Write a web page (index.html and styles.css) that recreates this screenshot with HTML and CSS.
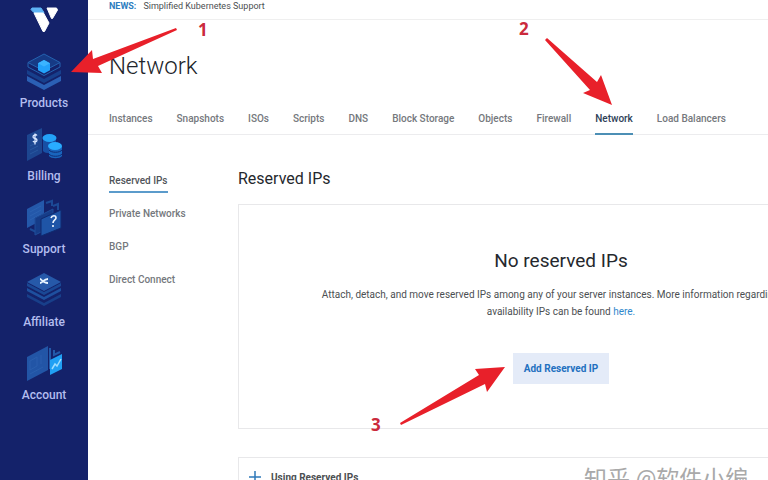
FILE: index.html
```html
<!DOCTYPE html>
<html lang="en">
<head>
    <meta charset="UTF-8">
    <meta name="viewport" content="width=device-width, initial-scale=1.0">
    <title>Network - Reserved IPs</title>
    <link rel="stylesheet" href="styles.css">
</head>
<body>
    <div class="app">
        <!-- Sidebar -->
        <nav class="sidebar">
            <a class="logo" href="#" aria-label="Home">
                <svg width="28" height="26" viewBox="0 0 28 26">
                    <path d="M2 1h9l3 4.500H3.800L1 2.500Z" fill="#5fb4f5" stroke="#5fb4f5" stroke-linejoin="round"/>
                    <path d="M4 6h9.500l5.500 10-4.500 8.500h-1.500Z" fill="#fff" stroke="#fff" stroke-linejoin="round"/>
                    <path d="M17 1h9.500l1 2-5 8.500h-1Z" fill="#fff" stroke="#fff" stroke-linejoin="round"/>
                </svg>
            </a>
            <a class="side-item" href="#">
                <svg width="36" height="38" viewBox="0 0 36 38">
                    <path d="M1 24l17 9 17-9v5l-17 9-17-9Z" fill="#2b60b5"/>
                    <path d="M1 18l17 9 17-9v4l-17 9-17-9Z" fill="#173f8c"/>
                    <path d="M18 2l16 8.500-16 8.500L2 10.500Z" fill="#163a85" stroke="#2462b0"/>
                    <path d="M2 15l16 8.500L34 15M2 10.500V15M34 10.500V15" fill="none" stroke="#2462b0"/>
                    <path d="M18 8l6 3.200v7L18 21.500l-6-3.300v-7Z" fill="#22a1fa"/>
                    <path d="M18 8l6 3.200-6 3.300-6-3.300Z" fill="#3bb4ff"/>
                </svg>
                <span>Products</span>
            </a>
            <a class="side-item" href="#">
                <svg width="36" height="38" viewBox="0 0 36 38">
                    <path d="M1 10l15-7v25L1 36Z" fill="#1d4690"/>
                    <path d="M4 25l8-4M4 29l8-4M4 21l8-4" stroke="#28589f"/>
                    <path d="M11 10.500c-1-1.500-4-.5-4 1.500s4 1 4 3-3 3-4 1M9 8.500v11" fill="none" stroke="#d9e7ff" stroke-width="1.300"/>
                    <path d="M17 13v13c2 3 12 3 13 0V13Z" fill="#1750a5"/>
                    <path d="M23 21v10c2 3 11 3 13 0V21Z" fill="#1965bd"/>
                    <path d="M23 25c2 3 11 3 13 0M23 29c2 3 11 3 13 0" fill="none" stroke="#102d76"/>
                    <ellipse cx="23.500" cy="13" rx="7" ry="4" fill="#23a2f7"/>
                    <ellipse cx="29" cy="21" rx="7" ry="4" fill="#29acff"/>
                </svg>
                <span>Billing</span>
            </a>
            <a class="side-item" href="#">
                <svg width="36" height="38" viewBox="0 0 36 38">
                    <path d="M1 11l17-9v19L1 30Z" fill="#2458aa"/>
                    <path d="M4 14l11-6M4 18l11-6M4 22l11-6" stroke="#2c62b2"/>
                    <path d="M20 5l6-2v5M27 8l5-2v6M4 31l6 3v-6" fill="none" stroke="#1c4a96" stroke-width="2"/>
                    <path d="M9 20l18-9v17L9 37Z" fill="#163c88" stroke="#1f4d9a"/>
                    <path d="M15 21l20-9v18l-15 6-5 2Z" fill="#1f55a7" stroke="#102a70"/>
                    <path d="M25 20c1-3 5-3 5 0 0 2-3 2-3 5M27 27v2" fill="none" stroke="#eef5ff" stroke-width="1.600"/>
                </svg>
                <span>Support</span>
            </a>
            <a class="side-item" href="#">
                <svg width="36" height="38" viewBox="0 0 36 38">
                    <path d="M1 23l17 9 17-9v3l-17 9-17-9Z" fill="#183f8a"/>
                    <path d="M1 17l17 9 17-9v3l-17 9-17-9Z" fill="#1e509f"/>
                    <path d="M1 12l17 9 17-9v3l-17 9-17-9Z" fill="#1a4895"/>
                    <path d="M18 2l17 9-17 9L1 11Z" fill="#2659a9"/>
                    <path d="M14 8c2 0 2 4 8 4M14 12c2 0 4-4 8-4" fill="none" stroke="#e7f4ff" stroke-width="1.800"/>
                </svg>
                <span>Affiliate</span>
            </a>
            <a class="side-item" href="#">
                <svg width="36" height="38" viewBox="0 0 36 38">
                    <path d="M1 13l21-11v24L1 37Z" fill="#2255a6"/>
                    <path d="M4 17l7-4v9l-7 4ZM4 30l13-7M15 11v9" fill="none" stroke="#2a5fae"/>
                    <path d="M24 4v21M28 6v5l6-3" fill="none" stroke="#235aa9" stroke-width="2"/>
                    <path d="M24 16l12-6v15l-12 6Z" fill="#20a0f4"/>
                    <path d="M26 25l3-5 2 2 4-7" fill="none" stroke="#9eddff" stroke-width="1.500"/>
                </svg>
                <span>Account</span>
            </a>
        </nav>

        <!-- Main content -->
        <main class="main">
            <div class="news"><a href="#">NEWS:</a><span>Simplified Kubernetes Support</span></div>
            <h1>Network</h1>

            <nav class="tabs">
                <a href="#">Instances</a>
                <a href="#">Snapshots</a>
                <a href="#">ISOs</a>
                <a href="#">Scripts</a>
                <a href="#">DNS</a>
                <a href="#">Block Storage</a>
                <a href="#">Objects</a>
                <a href="#">Firewall</a>
                <a class="active" href="#">Network</a>
                <a href="#">Load Balancers</a>
            </nav>

            <div class="content">
                <nav class="subnav">
                    <a class="active" href="#">Reserved IPs</a>
                    <a href="#">Private Networks</a>
                    <a href="#">BGP</a>
                    <a href="#">Direct Connect</a>
                </nav>

                <section class="panel">
                    <h2>Reserved IPs</h2>
                    <div class="card empty">
                        <h3>No reserved IPs</h3>
                        <p>Attach, detach, and move reserved IPs among any of your server instances. More information regarding high availability IPs can be found <a href="#">here.</a></p>
                        <button type="button">Add Reserved IP</button>
                    </div>
                    <div class="card help">
                        <svg width="12" height="12" viewBox="0 0 12 12"><path d="M6 0v12M0 6h12" stroke="#2f79b9" stroke-width="1.500"/></svg>
                        <h4>Using Reserved IPs</h4>
                    </div>
                </section>
            </div>
        </main>

        <!-- Step arrows and numbers over the page -->
        <svg class="arrow arrow-1" width="110" height="48" viewBox="0 0 110 48"><path d="M1 45L22 23l1 9L106 1l1 2L28 39l4 7Z"/></svg>
        <svg class="arrow arrow-2" width="70" height="70" viewBox="0 0 70 70"><path d="M1 2L3 0L53 44L57 37L68 67L39 55L46 52Z"/></svg>
        <svg class="arrow arrow-3" width="108" height="62" viewBox="0 0 108 62"><path d="M1 59L80 11L76 5L106 3L88 28L86 20L2 61Z"/></svg>
        <span class="step step-1">1</span>
        <span class="step step-2">2</span>
        <span class="step step-3">3</span>
        <span class="watermark">知乎 @软件小编</span>
    </div>
</body>
</html>
```
FILE: styles.css
```css
* {
    box-sizing: border-box;
}

body {
    margin: 0;
    font-family: Roboto, "Liberation Sans", sans-serif;
    font-size: 10px;
    color: #4c4f52;
    background-color: #fff;
}

a {
    color: inherit;
    text-decoration: none;
}

h1, h2, h3, h4, p {
    margin: 0;
}

.app {
    position: relative;
    display: flex;
    height: 100vh;
    overflow: hidden;
}

/* Sidebar */
.sidebar {
    flex: 0 0 88px;
    padding-top: 7px;
    background-color: #14226a;
    display: flex;
    flex-direction: column;
    align-items: center;
}

.logo {
    height: 45px;
}

.side-item {
    height: 73px;
    flex-shrink: 0;
    display: flex;
    flex-direction: column;
    align-items: center;
    gap: 5px;
    color: #b3bdef;
    font-size: 12px;
    font-weight: 500;
    line-height: 16px;
}

/* Main content */
.main {
    flex: 1;
    min-width: 0;
    overflow: hidden;
}

.news {
    display: flex;
    gap: 7px;
    height: 20px;
    padding-left: 21px;
    border-bottom: 1px solid #efefef;
    font-size: 9px;
    line-height: 12px;
}

.news a {
    color: #2d7dc0;
    font-weight: 700;
}

h1 {
    padding: 29px 21px 0;
    font-size: 24px;
    font-weight: 300;
    line-height: 34px;
    color: #22252b;
}

/* Tabs */
.tabs {
    display: flex;
    gap: 24px;
    margin-top: 23px;
    padding-left: 21px;
    border-bottom: 1px solid #ececee;
    font-weight: 500;
    white-space: nowrap;
    color: #75787d;
}

.tabs a {
    height: 29px;
    line-height: 26px;
    margin-bottom: -1px;
}

.tabs .active {
    color: #2f3f58;
    border-bottom: 2px solid #4c8fb5;
}

.content {
    display: flex;
    padding: 31px 0 0 21px;
}

.subnav {
    flex: 0 0 129px;
    display: flex;
    flex-direction: column;
    align-items: flex-start;
    gap: 9px;
    padding-top: 3px;
    font-weight: 500;
    line-height: 24px;
    color: #75787d;
}

.subnav .active {
    height: 24px;
    color: #50545a;
    border-bottom: 2px solid #5b9bcb;
}

/* The panel keeps its width and runs past a narrow window */
.panel {
    flex: 1 0 646px;
}

h2 {
    font-size: 16px;
    font-weight: 400;
    line-height: 26px;
    color: #25282d;
}

.card {
    border: 1px solid #e8e8ea;
}

.empty {
    display: flex;
    flex-direction: column;
    align-items: center;
    height: 225px;
    margin-top: 12px;
    padding-top: 43px;
}

h3 {
    font-size: 19px;
    font-weight: 400;
    line-height: 26px;
    color: #25282d;
}

.empty p {
    max-width: 500px;
    margin-top: 12px;
    line-height: 17px;
    text-align: center;
}

.empty p a {
    color: #2f88cc;
}

.empty button {
    width: 96px;
    height: 31px;
    margin-top: 33px;
    padding: 0;
    border: none;
    background-color: #e4ebf8;
    color: #2270c0;
    font: 700 10px Roboto, sans-serif;
    cursor: pointer;
}

.help {
    display: flex;
    align-items: center;
    gap: 10px;
    height: 40px;
    margin-top: 28px;
    padding-left: 10px;
}

h4 {
    font-size: 10px;
    font-weight: 700;
}

/* Step arrows and numbers */
.arrow {
    position: absolute;
    fill: #e8202a;
}

.arrow-1 {
    left: 70px;
    top: 27px;
}

.arrow-2 {
    left: 544px;
    top: 38px;
}

.arrow-3 {
    left: 399px;
    top: 364px;
}

.step {
    position: absolute;
    font: 700 17px/20px "Noto Sans", sans-serif;
    color: #cb2a3c;
}

.step-1 {
    left: 198px;
    top: 20px;
}

.step-2 {
    left: 519px;
    top: 19px;
}

.step-3 {
    left: 371px;
    top: 415px;
}

.watermark {
    position: absolute;
    left: 584px;
    top: 466px;
    font: 23px/28px Roboto, "Noto Sans CJK SC", sans-serif;
    color: #a9a9a9;
    white-space: nowrap;
}
```
